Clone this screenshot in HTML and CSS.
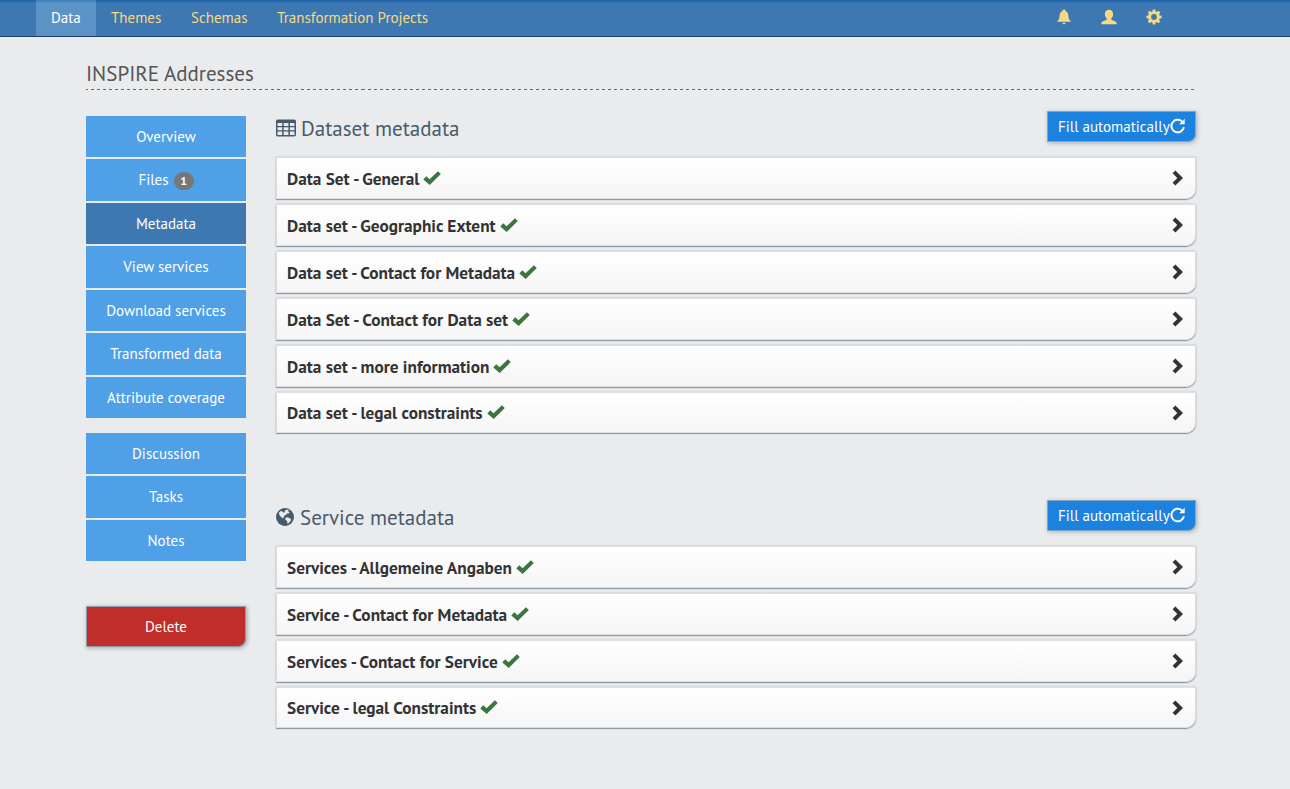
FILE: index.html
```html
<!DOCTYPE html>
<html lang="en">
<head>
<meta charset="utf-8">
<title>INSPIRE Addresses</title>
<link rel="stylesheet" href="styles.css">
</head>
<body>
<svg class="sprite" aria-hidden="true">
  <symbol id="check" viewBox="0 0 18 16"><path d="M0.300 9.400 3.200 6.200 6.600 9.300 14.900 1.300 17.800 4.100 6.700 14.900z"/></symbol>
  <symbol id="chevron" viewBox="0 0 12 16"><path d="M3.400.5 11 8l-7.600 7.500L.6 12.700 5.300 8 .6 3.300z"/></symbol>
  <symbol id="refresh" viewBox="0 0 16 16"><path d="M13.900 9.300A6.300 6.300 0 1 1 12 3.400" fill="none" stroke="currentColor" stroke-width="2"/><path d="M14.700.7v5.500H9.200z"/></symbol>
</svg>
<header class="topbar">
  <nav class="topnav">
    <a class="tab tab-data active"><span>Data</span></a>
    <a class="tab tab-themes"><span>Themes</span></a>
    <a class="tab tab-schemas"><span>Schemas</span></a>
    <a class="tab tab-projects"><span>Transformation Projects</span></a>
  </nav>
  <div class="tools">
    <svg viewBox="0 0 16 16"><path d="M8 .5c1 0 1.500.6 1.500 1.400 2 .7 2.800 2.500 2.900 4.900.1 3 .7 4 2.100 5v1H1.500v-1c1.400-1 2-2 2.100-5C3.700 4.400 4.500 2.600 6.500 1.900 6.500 1.100 7 .5 8 .5zM6.400 13.800h3.200c0 1-.7 1.500-1.600 1.500s-1.600-.5-1.600-1.500z"/></svg>
    <svg viewBox="0 0 16 16"><path d="M8 .7c2.600 0 4.100 1.600 4.100 4.300 0 2-.7 3.400-1.800 4.400v1.100c0 .6 4.200 1.600 5 2.700.4.500.5 1.200.5 2H.2c0-.8.1-1.500.5-2 .8-1.100 5-2.100 5-2.700V9.400C4.600 8.400 3.900 7 3.900 5 3.900 2.300 5.400.7 8 .7z"/></svg>
    <svg viewBox="0 0 16 16"><path fill-rule="evenodd" d="M6.800.4h2.400l.4 2 1.200.5 1.700-1.100 1.700 1.700-1.100 1.700.5 1.200 2 .4v2.400l-2 .4-.5 1.200 1.100 1.700-1.700 1.700-1.700-1.100-1.200.5-.4 2H6.800l-.4-2-1.200-.5-1.700 1.100-1.700-1.700 1.100-1.700-.5-1.200-2-.4V6.800l2-.4.5-1.200-1.100-1.700 1.700-1.700 1.700 1.100 1.200-.5zM8 5.100a2.900 2.900 0 1 0 0 5.800 2.900 2.900 0 0 0 0-5.800z"/></svg>
  </div>
</header>
<main class="page">
  <h1 class="title"><span>INSPIRE Addresses</span></h1>
  <div class="columns">
    <aside class="sidebar">
      <nav class="menu">
        <a>Overview</a>
        <a>Files <span class="badge">1</span></a>
        <a class="active">Metadata</a>
        <a>View services</a>
        <a>Download services</a>
        <a>Transformed data</a>
        <a>Attribute coverage</a>
      </nav>
      <nav class="menu">
        <a>Discussion</a>
        <a>Tasks</a>
        <a>Notes</a>
      </nav>
      <button class="delete">Delete</button>
    </aside>
    <div class="content">
      <section>
        <div class="section-head">
          <h2><svg class="table-icon" viewBox="0 0 20 18"><path fill-rule="evenodd" d="M1.800.5h16.400Q20 .5 20 2.300v13.400q0 1.800-1.800 1.800H1.800Q0 17.500 0 15.700V2.300Q0 .5 1.800.5zM1.500 4v3h4.700V4zm6.200 0v3h4.700V4zm6.200 0v3h4.600V4zM1.500 8.300v3h4.700v-3zm6.200 0v3h4.700v-3zm6.200 0v3h4.600v-3zM1.500 12.600V16h4.700v-3.400zm6.200 0V16h4.700v-3.400zm6.200 0V16h4.600v-3.400z"/></svg><span>Dataset metadata</span></h2>
          <button class="fill"><span>Fill automatically</span><svg><use href="#refresh"/></svg></button>
        </div>
        <div class="panels">
          <div class="panel"><span>Data Set - General</span><svg class="check"><use href="#check"/></svg><svg class="chevron"><use href="#chevron"/></svg></div>
          <div class="panel"><span>Data set - Geographic Extent</span><svg class="check"><use href="#check"/></svg><svg class="chevron"><use href="#chevron"/></svg></div>
          <div class="panel"><span>Data set - Contact for Metadata</span><svg class="check"><use href="#check"/></svg><svg class="chevron"><use href="#chevron"/></svg></div>
          <div class="panel"><span>Data Set - Contact for Data set</span><svg class="check"><use href="#check"/></svg><svg class="chevron"><use href="#chevron"/></svg></div>
          <div class="panel"><span>Data set - more information</span><svg class="check"><use href="#check"/></svg><svg class="chevron"><use href="#chevron"/></svg></div>
          <div class="panel"><span>Data set - legal constraints</span><svg class="check"><use href="#check"/></svg><svg class="chevron"><use href="#chevron"/></svg></div>
        </div>
      </section>
      <section>
        <div class="section-head">
          <h2><svg class="globe-icon" viewBox="0 0 18 18"><circle cx="9" cy="9" r="9"/><path class="land" d="M2.800 4.800 4.700 3l1.700.5.6 1 1.700-.3.200-1.700 2.300-.9 1.600.9-.6 1 1.500.9-1.200 1.100-1.700-.1-.8 1.500-2 .6.300 1.500-1.300.2.700 1.200-1.600-.5-2.400-2.500zM9.500 9.800l2.200-.5 3.400 1.700-.6 2.200-2.900 2.900-.5-2.800-1.800-1.700z"/></svg><span>Service metadata</span></h2>
          <button class="fill"><span>Fill automatically</span><svg><use href="#refresh"/></svg></button>
        </div>
        <div class="panels">
          <div class="panel"><span>Services - Allgemeine Angaben</span><svg class="check"><use href="#check"/></svg><svg class="chevron"><use href="#chevron"/></svg></div>
          <div class="panel"><span>Service - Contact for Metadata</span><svg class="check"><use href="#check"/></svg><svg class="chevron"><use href="#chevron"/></svg></div>
          <div class="panel"><span>Services - Contact for Service</span><svg class="check"><use href="#check"/></svg><svg class="chevron"><use href="#chevron"/></svg></div>
          <div class="panel"><span>Service - legal Constraints</span><svg class="check"><use href="#check"/></svg><svg class="chevron"><use href="#chevron"/></svg></div>
        </div>
      </section>
    </div>
  </div>
</main>
</body>
</html>
```
FILE: styles.css
```css
* { box-sizing: border-box; }
body {
  margin: 0;
  min-height: 789px;
  background: #e9ebec;
  color: #333;
  font: 15px/21.43px "PT Sans", "Noto Sans", sans-serif;
}
svg { fill: currentColor; flex: none; }
.sprite { display: none; }
.topbar {
  display: flex;
  justify-content: space-between;
  height: 37px;
  padding: 0 128px 0 36px;
  border-bottom: 1px solid #1b4166;
  background: linear-gradient(#165fa6, #3e78b2 3px);
  color: #f7d984;
}
.topnav { display: flex; }
.tab {
  padding-left: 15px;
  line-height: 35px;
  white-space: nowrap;
}
.tab-data { width: 60px; }
.tab-themes { width: 80px; }
.tab-schemas { width: 86px; }
.tab-projects { width: 182px; }
.tab.active { background: linear-gradient(#3578b9, #5c93c7 3px); color: #fff; }
.tools { display: flex; gap: 29px; padding-top: 9px; }
.tools svg { width: 16px; height: 16px; }
.page { width: 1110px; margin-left: 86px; padding-top: 22px; }
.title {
  height: 31px;
  margin: 0 0 26px;
  border-bottom: 1px dashed #3e78b2;
  border-image: repeating-linear-gradient(90deg, #44719f 0 3px, transparent 3px 6px) 1;
  color: #555;
  font-size: 21px;
  font-weight: 400;
  line-height: 30px;
}
.columns { display: flex; gap: 30px; }
.sidebar { width: 160px; }
.menu { display: flex; flex-direction: column; gap: 2px; margin-bottom: 15px; }
.menu a {
  height: 41.43px;
  padding: 10px 0;
  background: #50a0e8;
  color: #fff;
  text-align: center;
}
.menu a.active { background: #3e78b2; }
.badge {
  display: inline-block;
  width: 20px;
  height: 18px;
  margin-left: 1px;
  border-radius: 10px;
  background: #777;
  font-size: 12px;
  font-weight: 700;
  line-height: 18px;
  vertical-align: 0;
}
button { font: inherit; color: #fff; padding: 0; }
.delete {
  display: block;
  width: 160px;
  height: 41px;
  margin-top: 44.500px;
  border: 1px solid #8d9ca8;
  border-bottom-right-radius: 8px;
  background: #c12e2a;
  box-shadow: 1px 1px 4px rgba(60, 85, 110, .45);
}
.content { width: 920px; margin-top: -5px; }
section { height: 389px; }
section:last-child { height: auto; }
.section-head { display: flex; justify-content: space-between; height: 46px; }
h2 {
  display: flex;
  margin: 0;
  color: #465a6c;
  font-size: 21px;
  font-weight: 400;
  line-height: 35px;
}
.table-icon { width: 20px; height: 18px; margin: 8px 5px 0 0; }
.globe-icon { width: 18px; height: 18px; margin: 8px 6px 0 0; }
.land { fill: #e9ebec; }
.fill {
  display: flex;
  align-items: center;
  width: 149px;
  height: 31px;
  padding-left: 10px;
  border: 1px solid #7fa5c7;
  border-bottom-right-radius: 8px;
  background: #1c82e0;
  box-shadow: 1px 1px 4px rgba(60, 85, 110, .4);
}
.fill span { width: 112px; text-align: left; white-space: nowrap; }
.fill svg { width: 16px; height: 16px; margin-top: -2px; }
.panels { display: flex; flex-direction: column; gap: 5px; }
.panel {
  display: flex;
  align-items: center;
  height: 42px;
  padding: 0 11px 0 10px;
  border: 1px solid #dcdee1;
  border-bottom-right-radius: 10px;
  background: linear-gradient(#fff, #f5f5f5);
  box-shadow: 0 1px 1px #8795a2, 0 0 2px #aeb5bf;
  font-size: 17.25px;
  font-weight: 700;
}
.panel span { margin-top: 1px; }
.panel:last-child { height: 41px; }
.check { width: 18px; height: 16px; margin: 0 0 1px 4px; color: #3c763d; }
.chevron { width: 12px; height: 16px; margin-left: auto; }
```
